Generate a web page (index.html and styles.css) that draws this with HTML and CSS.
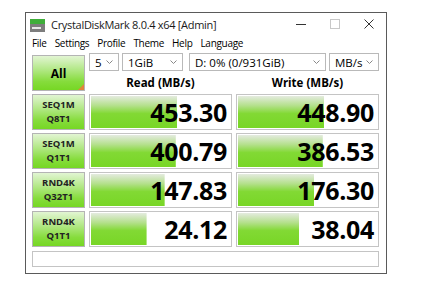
FILE: index.html
```html
<!DOCTYPE html>
<html lang="en">

<head>
    <meta charset="UTF-8">
    <meta name="viewport" content="width=device-width, initial-scale=1.0">
    <title>CrystalDiskMark</title>
    <link rel="stylesheet" href="styles.css">
</head>

<body>
    <div class="window">
        <!-- Title bar -->
        <div class="titlebar">
            <svg class="app-icon" width="16" height="13" viewBox="0 0 16 13">
                <rect x="0" y="0" width="15" height="5" fill="#3fae3a" />
                <rect x="0" y="5" width="15" height="8" fill="#7d7d7d" />
                <rect x="2" y="8" width="9" height="2" fill="#e8e8e8" />
            </svg>
            <span class="title">CrystalDiskMark 8.0.4 x64 [Admin]</span>
            <div class="controls">
                <span class="ctl">
                    <svg width="10" height="10" viewBox="0 0 10 10"><line x1="0" y1="5.5" x2="10" y2="5.5" stroke="#333" stroke-width="1" /></svg>
                </span>
                <span class="ctl">
                    <svg width="10" height="10" viewBox="0 0 10 10"><rect x="0.5" y="0.5" width="9" height="9" fill="none" stroke="#c8c8c8" stroke-width="1" /></svg>
                </span>
                <span class="ctl">
                    <svg width="10" height="10" viewBox="0 0 10 10"><path d="M0.5 0.5 L9.5 9.5 M9.5 0.5 L0.5 9.5" stroke="#333" stroke-width="1" /></svg>
                </span>
            </div>
        </div>

        <!-- Menu -->
        <div class="menubar">
            <span>File</span>
            <span>Settings</span>
            <span>Profile</span>
            <span>Theme</span>
            <span>Help</span>
            <span>Language</span>
        </div>

        <div class="content">
            <div class="top">
                <div class="btn-all">All<span class="corner"></span></div>
                <div class="selects">
                    <div class="select w-count">5<svg class="chev" width="7" height="4" viewBox="0 0 7 4"><polyline points="0.5,0.5 3.5,3.5 6.5,0.5" fill="none" stroke="#888" /></svg></div>
                    <div class="select w-size">1GiB<svg class="chev" width="7" height="4" viewBox="0 0 7 4"><polyline points="0.5,0.5 3.5,3.5 6.5,0.5" fill="none" stroke="#888" /></svg></div>
                    <div class="select w-drive">D: 0% (0/931GiB)<svg class="chev" width="7" height="4" viewBox="0 0 7 4"><polyline points="0.5,0.5 3.5,3.5 6.5,0.5" fill="none" stroke="#888" /></svg></div>
                    <div class="select w-unit">MB/s<svg class="chev" width="7" height="4" viewBox="0 0 7 4"><polyline points="0.5,0.5 3.5,3.5 6.5,0.5" fill="none" stroke="#888" /></svg></div>
                </div>
                <div class="col-head">Read (MB/s)</div>
                <div class="col-head">Write (MB/s)</div>
            </div>

            <div class="rows">
                <div class="label">SEQ1M<br>Q8T1</div>
                <div class="cell"><div class="fill" style="--w: 62%">453.30</div></div>
                <div class="cell"><div class="fill" style="--w: 62%">448.90</div></div>

                <div class="label">SEQ1M<br>Q1T1</div>
                <div class="cell"><div class="fill" style="--w: 61%">400.79</div></div>
                <div class="cell"><div class="fill" style="--w: 61%">386.53</div></div>

                <div class="label">RND4K<br>Q32T1</div>
                <div class="cell"><div class="fill" style="--w: 53%">147.83</div></div>
                <div class="cell"><div class="fill" style="--w: 55%">176.30</div></div>

                <div class="label">RND4K<br>Q1T1</div>
                <div class="cell"><div class="fill" style="--w: 40%">24.12</div></div>
                <div class="cell"><div class="fill" style="--w: 44%">38.04</div></div>
            </div>

            <div class="statusbar"></div>
        </div>
    </div>
</body>

</html>
```

FILE: styles.css
```css
/* Reset Styles */
* {
    margin: 0;
    padding: 0;
    box-sizing: border-box;
}

body {
    font-family: "Open Sans", "Noto Sans", sans-serif;
    background-color: #fff;
    color: #000;
    padding: 12px 0 0 25px;
}

/* Window */
.window {
    width: 362px;
    height: 262px;
    border: 1px solid #5a5a5a;
    background: #fff;
}

/* Title bar */
.titlebar {
    height: 22px;
    display: flex;
    align-items: center;
    padding-left: 4px;
}

.app-icon {
    margin-right: 5px;
    margin-top: 3px;
}

.title {
    font-size: 11px;
    color: #1a1a1a;
    letter-spacing: -0.3px;
    margin-top: 1px;
}

.controls {
    margin-left: auto;
    display: flex;
    height: 100%;
}

.ctl {
    width: 34px;
    display: flex;
    align-items: center;
    justify-content: center;
}

/* Menu */
.menubar {
    height: 16px;
    display: flex;
    align-items: center;
    padding-left: 6px;
    gap: 8px;
    font-size: 10px;
    letter-spacing: -0.3px;
}

/* Main area */
.content {
    padding: 2px 6px 0 6px;
}

.top,
.rows {
    display: grid;
    grid-template-columns: 53px 143px 143px;
    column-gap: 4px;
}

.top {
    grid-template-rows: 18px 20px;
}

.btn-all {
    grid-row: 1 / 3;
    margin-top: 2px;
    height: 36px;
    position: relative;
    border: 1px solid #b4b4b4;
    background: linear-gradient(to bottom, #e2f5d3 0%, #b2e886 40%, #86dc3c 75%, #76d724 100%);
    display: flex;
    align-items: center;
    justify-content: center;
    font-size: 12px;
    font-weight: bold;
}

.corner {
    position: absolute;
    right: 0;
    bottom: 0;
    width: 0;
    height: 0;
    border-left: 6px solid transparent;
    border-bottom: 6px solid #e0843a;
}

.selects {
    grid-column: 2 / 4;
    display: flex;
    gap: 3px;
}

.select {
    height: 18px;
    border: 1px solid #b9b9b9;
    display: flex;
    align-items: center;
    justify-content: space-between;
    padding: 0 5px 0 5px;
    font-size: 11.5px;
}

.chev {
    flex: none;
}

.w-count { width: 30px; }
.w-size { width: 61px; }
.w-drive { width: 137px; margin-left: 3px; }
.w-unit { width: 50px; }

.col-head {
    align-self: end;
    text-align: center;
    font-size: 11.5px;
    font-weight: bold;
    line-height: 15px;
    padding-bottom: 1px;
}

/* Benchmark rows */
.rows {
    margin-top: 3px;
    grid-auto-rows: 36px;
    row-gap: 3px;
}

.label {
    border: 1px solid #b4b4b4;
    background: linear-gradient(to bottom, #e2f5d3 0%, #b2e886 40%, #86dc3c 75%, #76d724 100%);
    display: flex;
    flex-direction: column;
    justify-content: center;
    text-align: center;
    font-size: 9.5px;
    font-weight: bold;
    line-height: 14px;
    color: #222;
}

.cell {
    border: 1px solid #c4c4c4;
    padding: 1px;
}

.fill {
    height: 100%;
    background: linear-gradient(to bottom, #e4ebdf 0%, #b4e08c 30%, #82d934 55%, #78d626 100%) no-repeat;
    background-size: var(--w) 100%;
    text-align: right;
    padding-right: 3px;
    font-size: 25px;
    font-weight: bold;
    line-height: 32px;
    letter-spacing: -0.3px;
}

/* Status bar */
.statusbar {
    margin-top: 4px;
    width: 347px;
    height: 16px;
    border: 1px solid #c4c4c4;
}
```
